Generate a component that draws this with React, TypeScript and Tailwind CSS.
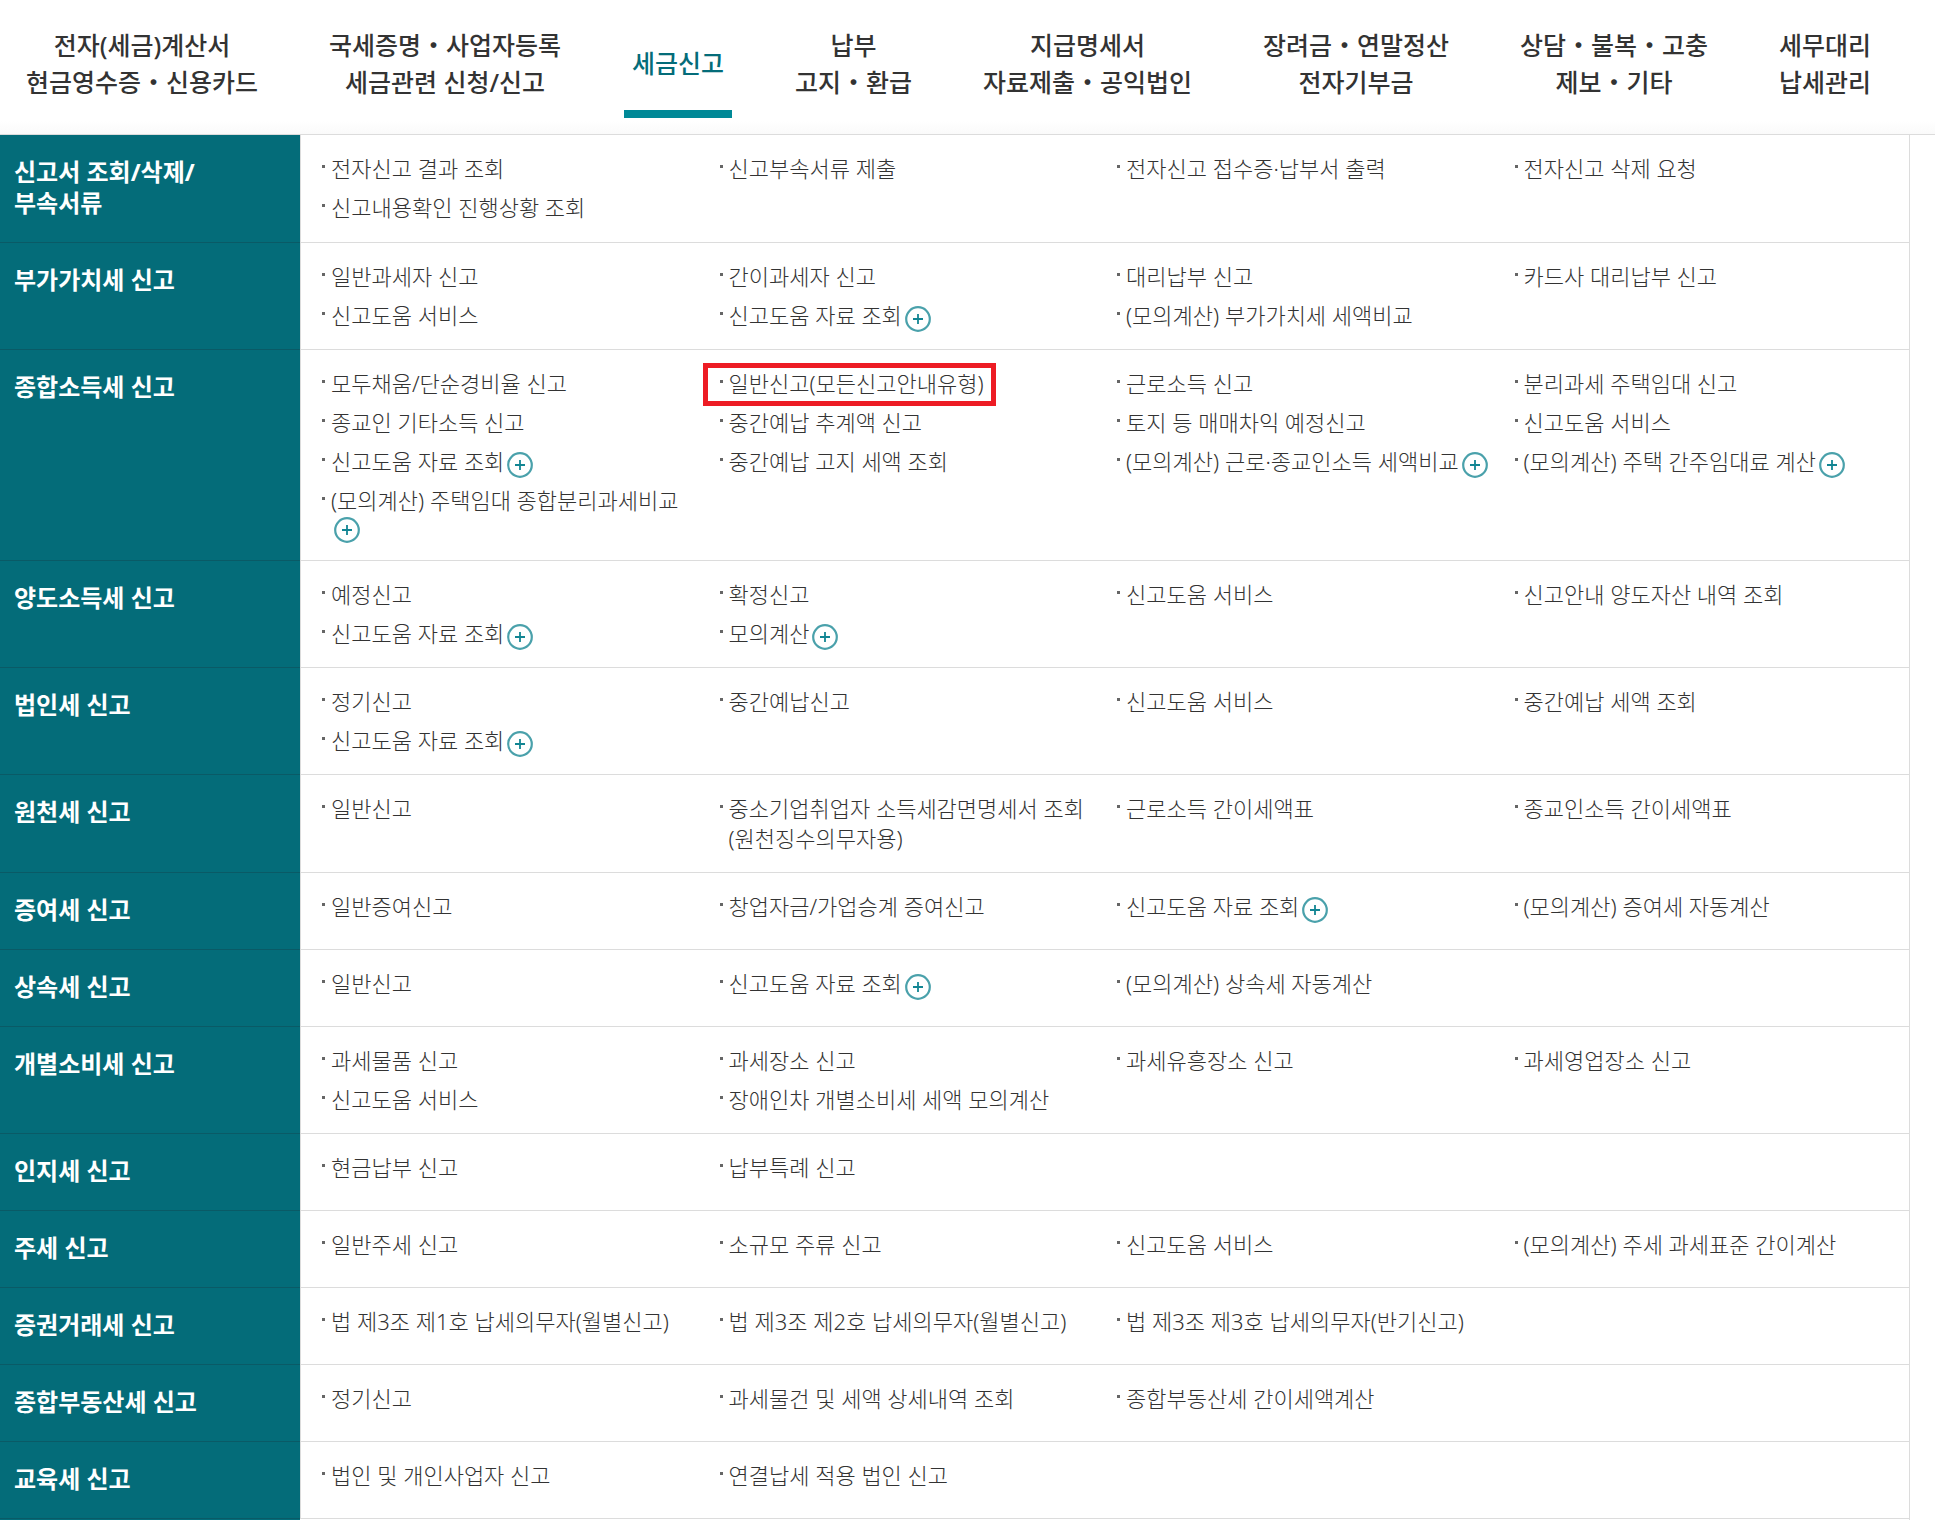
import clsx from 'clsx';

type MenuItem = {
    label: string;
    more?: boolean;
    marked?: boolean;
};

type MenuRow = {
    title: string;
    items: (MenuItem | string)[];
};

const TABS = [
    { lines: ['전자(세금)계산서', '현금영수증・신용카드'] },
    { lines: ['국세증명・사업자등록', '세금관련 신청/신고'] },
    { lines: ['세금신고'], active: true },
    { lines: ['납부', '고지・환급'] },
    { lines: ['지급명세서', '자료제출・공익법인'] },
    { lines: ['장려금・연말정산', '전자기부금'] },
    { lines: ['상담・불복・고충', '제보・기타'] },
    { lines: ['세무대리', '납세관리'] },
];

const ROWS: MenuRow[] = [
    {
        title: '신고서 조회/삭제/\n부속서류',
        items: ['전자신고 결과 조회', '신고부속서류 제출', '전자신고 접수증·납부서 출력', '전자신고 삭제 요청', '신고내용확인 진행상황 조회'],
    },
    {
        title: '부가가치세 신고',
        items: [
            '일반과세자 신고',
            '간이과세자 신고',
            '대리납부 신고',
            '카드사 대리납부 신고',
            '신고도움 서비스',
            { label: '신고도움 자료 조회', more: true },
            '(모의계산) 부가가치세 세액비교',
        ],
    },
    {
        title: '종합소득세 신고',
        items: [
            '모두채움/단순경비율 신고',
            { label: '일반신고(모든신고안내유형)', marked: true },
            '근로소득 신고',
            '분리과세 주택임대 신고',
            '종교인 기타소득 신고',
            '중간예납 추계액 신고',
            '토지 등 매매차익 예정신고',
            '신고도움 서비스',
            { label: '신고도움 자료 조회', more: true },
            '중간예납 고지 세액 조회',
            { label: '(모의계산) 근로·종교인소득 세액비교', more: true },
            { label: '(모의계산) 주택 간주임대료 계산', more: true },
            { label: '(모의계산) 주택임대 종합분리과세비교', more: true },
        ],
    },
    {
        title: '양도소득세 신고',
        items: [
            '예정신고',
            '확정신고',
            '신고도움 서비스',
            '신고안내 양도자산 내역 조회',
            { label: '신고도움 자료 조회', more: true },
            { label: '모의계산', more: true },
        ],
    },
    {
        title: '법인세 신고',
        items: ['정기신고', '중간예납신고', '신고도움 서비스', '중간예납 세액 조회', { label: '신고도움 자료 조회', more: true }],
    },
    {
        title: '원천세 신고',
        items: ['일반신고', '중소기업취업자 소득세감면명세서 조회\n(원천징수의무자용)', '근로소득 간이세액표', '종교인소득 간이세액표'],
    },
    {
        title: '증여세 신고',
        items: ['일반증여신고', '창업자금/가업승계 증여신고', { label: '신고도움 자료 조회', more: true }, '(모의계산) 증여세 자동계산'],
    },
    {
        title: '상속세 신고',
        items: ['일반신고', { label: '신고도움 자료 조회', more: true }, '(모의계산) 상속세 자동계산'],
    },
    {
        title: '개별소비세 신고',
        items: ['과세물품 신고', '과세장소 신고', '과세유흥장소 신고', '과세영업장소 신고', '신고도움 서비스', '장애인차 개별소비세 세액 모의계산'],
    },
    { title: '인지세 신고', items: ['현금납부 신고', '납부특례 신고'] },
    { title: '주세 신고', items: ['일반주세 신고', '소규모 주류 신고', '신고도움 서비스', '(모의계산) 주세 과세표준 간이계산'] },
    {
        title: '증권거래세 신고',
        items: ['법 제3조 제1호 납세의무자(월별신고)', '법 제3조 제2호 납세의무자(월별신고)', '법 제3조 제3호 납세의무자(반기신고)'],
    },
    { title: '종합부동산세 신고', items: ['정기신고', '과세물건 및 세액 상세내역 조회', '종합부동산세 간이세액계산'] },
    { title: '교육세 신고', items: ['법인 및 개인사업자 신고', '연결납세 적용 법인 신고'] },
];

function MoreButton() {
    return (
        <button type="button" aria-label="하위 메뉴 열기" className="-mb-0.5 ml-[3px] mt-0.5 h-[26px] w-[26px]">
            <svg viewBox="0 0 26 26" className="h-full w-full" fill="none">
                <circle cx="13" cy="13" r="11.8" stroke="#4aa1ab" strokeWidth="2.2" />
                <path d="M13 8v10M8 13h10" stroke="#128593" strokeWidth="1.8" />
            </svg>
        </button>
    );
}

function Item({ item }: { item: MenuItem }) {
    return (
        <li className="relative flex flex-wrap content-start items-end pl-3 pr-4">
            <span className="absolute left-[3px] top-3 h-[3px] w-[3px] bg-[#666]" />
            {item.marked && <span className="absolute -left-[14px] -top-[5px] h-[43px] w-[293px] border-[5px] border-[#ed1c24]" />}
            <a href="#" className="whitespace-pre-line">{item.label}</a>
            {item.more && <MoreButton />}
        </li>
    );
}

export default function App() {
    return (
        <div className="flex min-h-screen flex-col bg-white font-['Noto_Sans','Noto_Sans_CJK_KR',sans-serif] text-[#333] [word-break:keep-all]">
            <nav className="flex h-[135px] items-start justify-between border-b border-[#dcdcdc] bg-linear-to-b from-white from-90% to-[#fafafa] pl-[18px] pr-14 pt-[18px]">
                {TABS.map(tab => (
                    <a
                        key={tab.lines[0]}
                        href="#"
                        className={clsx(
                            'flex h-[100px] flex-col px-2 text-center text-[25px] font-medium leading-[37px] whitespace-nowrap',
                            tab.active ? 'border-b-8 border-[#008997] pt-[27px] text-[#046c79]' : 'pt-[9px]'
                        )}
                    >
                        {tab.lines.map(line => (
                            <span key={line}>{line}</span>
                        ))}
                    </a>
                ))}
            </nav>

            <main className="mr-[25px] flex flex-1 flex-col border-r border-[#dcdcdc]">
                {ROWS.map(row => (
                    <section key={row.title} className="flex">
                        <h2 className="w-[300px] shrink-0 border-b border-[#0a5a66] bg-[#046c79] pb-6 pl-[14px] pt-[21px] text-2xl font-bold leading-[31px] whitespace-pre-line text-white">
                            {row.title}
                        </h2>
                        <ul className="grid flex-1 auto-rows-min grid-cols-4 gap-y-[9px] border-b border-l border-[#dcdcdc] pb-[19px] pl-[18px] pt-[18px] text-[22px] font-light leading-[30px]">
                            {row.items.map((item, idx) => (
                                <Item key={idx} item={typeof item === 'string' ? { label: item } : item} />
                            ))}
                        </ul>
                    </section>
                ))}
                <div className="w-[300px] flex-1 bg-[#046c79]" />
            </main>
        </div>
    );
}
